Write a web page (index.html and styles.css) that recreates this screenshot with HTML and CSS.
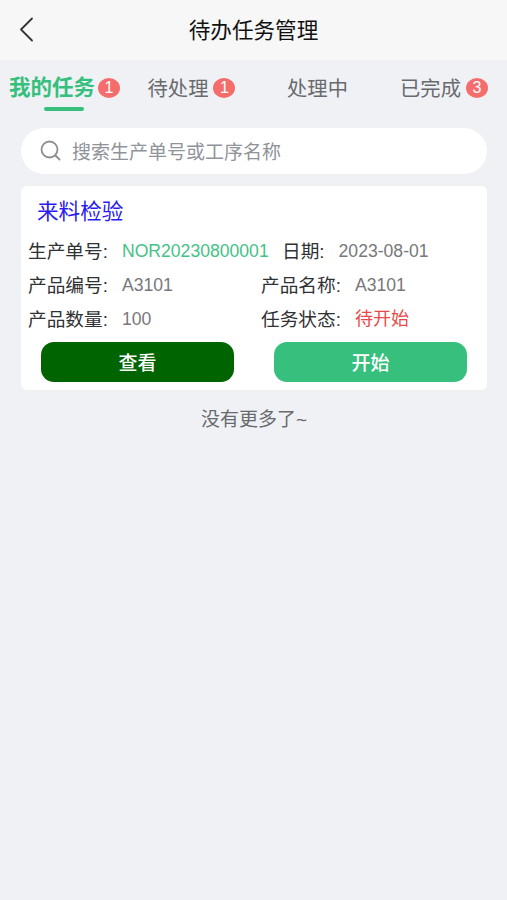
FILE: index.html
```html
<!DOCTYPE html>
<html lang="zh-CN">
<head>
<meta charset="utf-8">
<title>待办任务管理</title>
<link rel="stylesheet" href="styles.css">
</head>
<body>
<header class="navbar">
  <svg class="back" viewBox="0 0 16 26"><path d="M13 2.5 2 13.5 13 24.5"/></svg>
  <h1>待办任务管理</h1>
</header>
<nav class="tabs">
  <a class="tab active"><span>我的任务</span><b class="badge">1</b></a>
  <a class="tab"><span>待处理</span><b class="badge">1</b></a>
  <a class="tab"><span>处理中</span></a>
  <a class="tab"><span>已完成</span><b class="badge">3</b></a>
</nav>
<main>
  <div class="search">
    <svg viewBox="0 0 22 22"><circle cx="9.5" cy="9.5" r="8"/><path d="m15.5 15.5 4 4"/></svg>
    <span>搜索生产单号或工序名称</span>
  </div>
  <section class="card">
    <h2>来料检验</h2>
    <div class="row first">
      <div class="field"><label>生产单号:</label><span class="green">NOR20230800001</span></div>
      <div class="field"><label>日期:</label><span>2023-08-01</span></div>
    </div>
    <div class="row">
      <div class="field"><label>产品编号:</label><span>A3101</span></div>
      <div class="field"><label>产品名称:</label><span>A3101</span></div>
    </div>
    <div class="row">
      <div class="field"><label>产品数量:</label><span>100</span></div>
      <div class="field"><label>任务状态:</label><span class="red">待开始</span></div>
    </div>
    <div class="actions">
      <button class="view">查看</button>
      <button class="start">开始</button>
    </div>
  </section>
  <p class="end">没有更多了~</p>
</main>
</body>
</html>
```
FILE: styles.css
```css
* { box-sizing: border-box; }
body {
  margin: 0;
  min-height: 900px;
  background: #eff1f5;
  color: #303133;
  font-family: "Liberation Sans", "Noto Sans CJK SC", sans-serif;
  font-size: 18.7px;
}
svg { fill: none; stroke-linecap: round; stroke-linejoin: round; }
.navbar {
  display: grid;
  grid-template-columns: 60px 1fr 60px;
  align-items: center;
  height: 60px;
  background: #f7f7f7;
}
.back { width: 16px; height: 26px; margin: -3px 0 0 19px; stroke: #333; stroke-width: 1.8; }
h1 { margin: 0; padding-bottom: 3px; font-size: 21.6px; font-weight: 400; text-align: center; color: #111; }
.tabs {
  display: grid;
  grid-template-columns: 129px 125px 127px 126px;
  height: 58px;
}
.tab {
  display: flex;
  justify-content: center;
  align-items: center;
  gap: 5px;
  height: 56px;
  font-size: 20.3px;
  color: #686a6e;
  white-space: nowrap;
}
.tab > span { padding-bottom: 2px; }
.tab.active { gap: 3px; }
.tab.active span {
  display: flex;
  flex-direction: column;
  height: 39px;
  margin-top: 10px;
  padding: 0;
  line-height: 29px;
  font-size: 21.5px;
  font-weight: 700;
  color: #36bf7d;
}
.tab.active span::after { content: ""; width: 40px; height: 4px; flex: none; margin: 4px 0 0 35px; border-radius: 2px; background: #36bf7d; }
.badge {
  width: 22px;
  height: 20px;
  border-radius: 11px / 10px;
  background: #f56c6c;
  color: #fff;
  font-size: 16px;
  font-weight: 400;
  line-height: 20px;
  text-align: center;
}
main { padding: 10px 20px 0 21px; }
.search {
  display: flex;
  align-items: center;
  gap: 10px;
  height: 46px;
  padding-left: 19px;
  border-radius: 23px;
  background: #fff;
  color: #909399;
  font-size: 19px;
}
.search span { padding-bottom: 2px; }
.search svg { width: 22px; height: 22px; stroke: #8c8e92; stroke-width: 1.8; }
.card { height: 204px; margin-top: 12px; border-radius: 6px; background: #fff; }
h2 { margin: 0; padding: 10px 16px 0; height: 48px; font-size: 21.6px; font-weight: 400; line-height: 32px; color: #2a1cf0; }
.row { display: grid; grid-template-columns: 233px 1fr; height: 34px; padding-left: 7px; }
.row.first { grid-template-columns: 254px 1fr; }
.field { display: flex; align-items: center; gap: 14px; white-space: nowrap; }
.field label { padding-bottom: 3px; }
.field span { font-size: 17.6px; color: #77787b; }
.field .green { color: #45c287; }
.field .red { padding-bottom: 5px; font-size: 18px; color: #e64a4a; }
.actions { display: flex; gap: 40px; padding: 6px 20px 0; }
button { flex: 1; height: 40px; padding: 0 0 2px; border: 0; border-radius: 13px; color: #fff; font: inherit; font-size: 19px; font-weight: 500; }
.view { background: #006400; }
.start { background: #36bf7d; }
.end { margin: 15px 0 0; text-align: center; color: #686a6e; font-size: 19px; line-height: 30px; }
```
